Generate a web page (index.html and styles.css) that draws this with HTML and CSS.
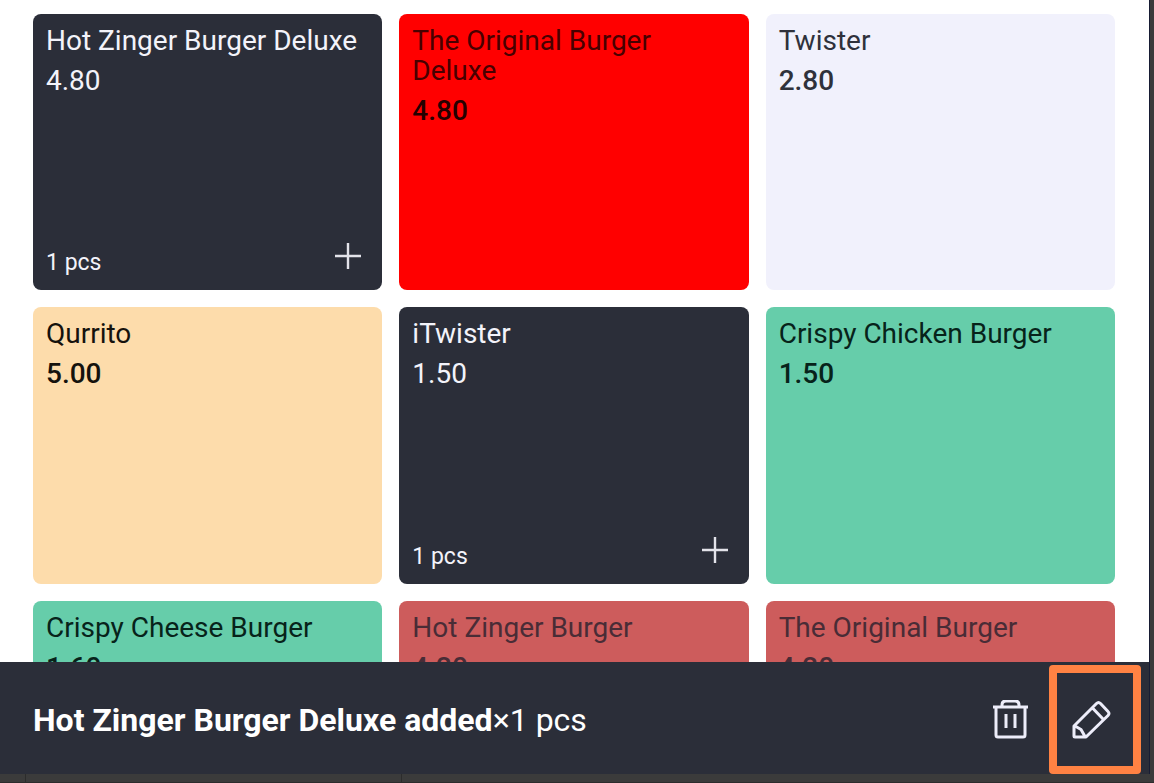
FILE: index.html
```html
<!DOCTYPE html>
<html lang="en">
<head>
<meta charset="utf-8">
<title>Menu</title>
<link rel="stylesheet" href="styles.css">
</head>
<body>
<div class="app">
  <main class="products">
    <button class="card card-dark">
      <span class="name">Hot Zinger Burger Deluxe</span>
      <span class="price">4.80</span>
      <span class="card-foot"><span class="qty">1 pcs</span>
        <svg class="plus" viewBox="0 0 28 28" aria-hidden="true"><path d="M14 1v26M1 14h26"/></svg></span>
    </button>
    <button class="card card-red">
      <span class="name">The Original Burger Deluxe</span>
      <span class="price">4.80</span>
    </button>
    <button class="card card-pale">
      <span class="name">Twister</span>
      <span class="price">2.80</span>
    </button>
    <button class="card card-sand">
      <span class="name">Qurrito</span>
      <span class="price">5.00</span>
    </button>
    <button class="card card-dark">
      <span class="name">iTwister</span>
      <span class="price">1.50</span>
      <span class="card-foot"><span class="qty">1 pcs</span>
        <svg class="plus" viewBox="0 0 28 28" aria-hidden="true"><path d="M14 1v26M1 14h26"/></svg></span>
    </button>
    <button class="card card-green">
      <span class="name">Crispy Chicken Burger</span>
      <span class="price">1.50</span>
    </button>
    <button class="card card-green">
      <span class="name">Crispy Cheese Burger</span>
      <span class="price">1.60</span>
    </button>
    <button class="card card-rose">
      <span class="name">Hot Zinger Burger</span>
      <span class="price">4.20</span>
    </button>
    <button class="card card-rose">
      <span class="name">The Original Burger</span>
      <span class="price">4.20</span>
    </button>
  </main>
  <footer class="bar">
    <p class="message"><strong>Hot Zinger Burger Deluxe added</strong>×1 pcs</p>
    <button class="action" aria-label="Delete">
      <svg class="icon" viewBox="0 0 40 40" aria-hidden="true">
        <path d="M3 7h35M6 7v28q0 2 2 2h25q2 0 2-2V7M12 7V5q0-4 4-4h9q4 0 4 4v2M16 14v14M25 14v14"/>
      </svg>
    </button>
    <button class="action action-marked" aria-label="Edit">
      <svg class="icon" viewBox="0 0 40 40" aria-hidden="true">
        <path d="M3 26v10q0 1 1 1h11L37 15.500q2-2 0-4L29.500 3.500q-2-2-4 0zM21.500 8l11 11.500M4 26l6 3.500 4 7"/>
      </svg>
    </button>
  </footer>
</div>
<div class="frame-bottom"></div>
</body>
</html>
```
FILE: styles.css
```css
* {
  box-sizing: border-box;
}

body {
  margin: 0;
  height: 100vh;
  display: flex;
  flex-direction: column;
  overflow: hidden;
  background: #3b3b3b;
  font-family: Roboto, "Liberation Sans", sans-serif;
}

button {
  margin: 0;
  border: 0;
  font: inherit;
  text-align: left;
  cursor: pointer;
}

.app {
  flex: 1;
  min-height: 0;
  display: flex;
  flex-direction: column;
  margin-right: 4px;
  border-right: 1px solid #171c33;
  background: #fff;
}

.products {
  flex: 1;
  min-height: 0;
  overflow: hidden;
  display: grid;
  grid-template-columns: repeat(3, 1fr);
  align-content: start;
  gap: 17px;
  padding: 14px 34px 0 33px;
}

.card {
  display: flex;
  flex-direction: column;
  gap: 10px;
  aspect-ratio: 349 / 276;
  padding: 12px 20px 6px 13px;
  border-radius: 8px;
  font-size: 28px;
  line-height: 30px;
}

.price {
  font-weight: 500;
}

.card-dark {
  background: #2b2e39;
  color: #f3f3fa;
}

.card-dark .name {
  margin-right: -16px;
}

.card-dark .price {
  font-weight: 400;
}

.card-red {
  background: #f00;
  color: #480000;
}

.card-red .price {
  color: #250000;
}

.card-pale {
  background: #f1f1fc;
  color: #2f313b;
}

.card-sand {
  background: #fddcab;
  color: #15120d;
}

.card-green {
  background: #66cdaa;
  color: #07231a;
}

.card-rose {
  background: #cd5c5c;
  color: #492c36;
}

.card-foot {
  display: flex;
  align-items: center;
  justify-content: space-between;
  margin-top: auto;
}

.qty {
  font-size: 23px;
}

.plus {
  width: 28px;
  height: 28px;
  margin-bottom: 14px;
  fill: none;
  stroke: #e3e3ea;
  stroke-width: 2.4;
}

.bar {
  display: flex;
  align-items: center;
  height: 112px;
  padding: 3px 8px 0 33px;
  background: #2b2e39;
  color: #fff;
}

.message {
  flex: 1;
  margin: 0;
  font-size: 32px;
  line-height: 36px;
}

.action {
  display: flex;
  align-items: center;
  justify-content: center;
  width: 78px;
  height: 100%;
  padding: 0;
  background: none;
}

.action-marked {
  width: 92px;
  padding-right: 8px;
  border: 8px solid #ff8243;
  border-radius: 4px;
}

.icon {
  width: 40px;
  height: 40px;
  fill: none;
  stroke: #ededfa;
  stroke-width: 3;
  stroke-linejoin: round;
}

.frame-bottom {
  height: 9px;
  background: linear-gradient(#2c2c2c, #2c2c2c) 25px 0 / 1px 100% no-repeat,
    linear-gradient(#2c2c2c, #2c2c2c) 401px 0 / 1px 100% no-repeat, #3b3b3b;
  border-bottom: 1px solid #2c2c2c;
}
```
